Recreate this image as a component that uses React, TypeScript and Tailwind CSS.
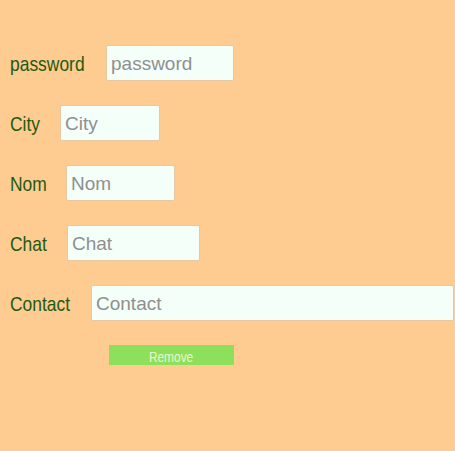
const fields = [
  { label: 'password', labelW: 'w-[75px]', width: 'w-[128px]' },
  { label: 'City', labelW: 'w-[29px]', width: 'w-[100px]' },
  { label: 'Nom', labelW: 'w-[35px]', width: 'w-[109px]' },
  { label: 'Chat', labelW: 'w-[36px]', width: 'w-[133px]' },
  { label: 'Contact', labelW: 'w-[60px]', width: 'w-[363px]' },
];

export default function App() {
  return (
    <div className="min-h-[451px] bg-[#fecb91] pt-[45px] pl-[10px] font-['Liberation_Sans',Arial,sans-serif]">
      {fields.map((f) => (
        <div key={f.label} className="flex items-center gap-[21px] mb-[24px]">
          <label className={`${f.labelW} pt-[2px] text-[21px] text-[#1e5a12] whitespace-nowrap`}>
            <span className="inline-block origin-left scale-x-[0.83]">{f.label}</span>
          </label>
          <input
            placeholder={f.label}
            className={`${f.width} h-[36px] px-[4px] pt-[2px] text-[19px] bg-[#f5fffa] border border-[#e6c9a4] rounded-[2px] placeholder:text-[#8f8f8f] outline-none`}
          />
        </div>
      ))}
      <button className="block ml-[99px] w-[125px] h-[20px] pt-[3px] bg-[#8ce05a] text-[14px] text-[#e9f7d8] leading-none">
        <span className="inline-block scale-x-[0.85]">Remove</span>
      </button>
    </div>
  );
}
